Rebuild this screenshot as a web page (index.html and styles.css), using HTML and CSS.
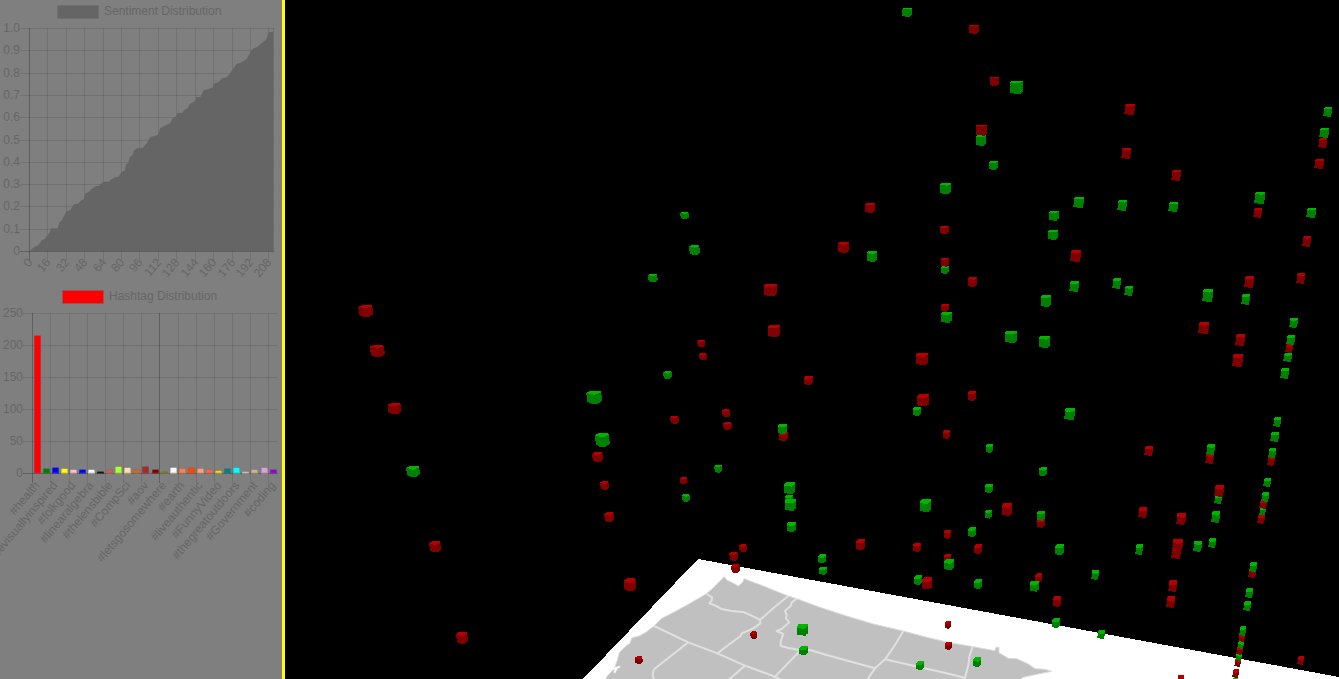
FILE: index.html
```html
<!DOCTYPE html>
<html lang="en">
<head>
<meta charset="utf-8">
<title>Tweet Sentiment Map</title>
<link rel="stylesheet" href="styles.css">
</head>
<body>
<div class="app">
  <aside class="sidebar">
    <svg class="chart" id="sentiment" viewBox="0 0 282 285" role="img" aria-label="Sentiment Distribution"></svg>
    <svg class="chart" id="hashtags" viewBox="0 285 282 290" role="img" aria-label="Hashtag Distribution"></svg>
  </aside>
  <main class="stage">
    <svg class="scene" viewBox="285 0 1054 679" preserveAspectRatio="xMinYMin slice" role="img" aria-label="3D map of tweets">
      <polygon class="plane" points="583,679 698,559 1339,677 1339,679"/>
      <g transform="translate(580 550) scale(0.33333)">
        <path class="land" d="M70,400 L82,378 97,362 105,350 112,330 118,308 135,290 150,280 155,264 180,257 200,245 222,228 245,205 290,182 330,160 378,132 395,118 415,98 433,80 440,90 455,97 475,108 488,97 492,86 545,106 625,138 650,146 720,172 800,198 880,222 970,243 1040,262 1110,278 1180,290 1245,302 1248,292 1257,292 1257,308 1285,325 1310,326 1345,342 1365,356 1395,358 1415,364 1370,373 1330,382 1300,400 Z"/>
        <path class="border" d="M380,132 L396,142 395,152 388,160 405,166 425,177 455,183 490,186 515,197 540,210 M625,138 L585,170 540,210 541,220 520,235 485,250 482,258 445,285 412,310 M222,228 L325,277 412,310 495,347 585,380 605,390 M325,277 L222,358 218,372 222,392 M650,146 L635,157 632,168 615,182 620,195 618,205 628,217 605,237 590,243 610,252 602,275 602,288 625,294 655,299 690,300 740,315 885,355 M658,305 L580,385 M495,347 L445,390 M970,243 L945,285 915,328 885,355 860,392 M915,328 L1020,352 1100,370 1155,384 M1178,290 L1168,320 1165,345 1155,384 1152,392"/>
        <path class="inlet" d="M96,358 L120,350 M112,352 L103,368"/>
      </g>
      <g id="cubes" class="cubes"></g>
    </svg>
  </main>
</div>
<script src="main.js"></script>
</body>
</html>
```

FILE: styles.css
```css
* {
  box-sizing: border-box;
}

body {
  margin: 0;
  background: #000;
  font-family: "Liberation Sans", Arial, Helvetica, sans-serif;
}

.app {
  display: flex;
  height: 100vh;
  overflow: hidden;
}

.sidebar {
  display: flex;
  flex: 0 0 285px;
  flex-direction: column;
  overflow: hidden;
  background: #7f7f7f;
  border-right: 3px solid #ff0;
}

.chart {
  display: block;
  width: 100%;
  flex: none;
}

.chart text {
  fill: #666;
  font-size: 12px;
}

.tick-end {
  text-anchor: end;
}

.grid {
  stroke: rgba(0, 0, 0, 0.1);
  shape-rendering: crispEdges;
}

.axis {
  stroke: rgba(0, 0, 0, 0.25);
  shape-rendering: crispEdges;
}

.area {
  fill: #656565;
}

.swatch {
  stroke: rgba(110, 110, 110, 0.4);
}

.stage {
  flex: 1;
  min-width: 0;
}

.scene {
  display: block;
  width: 100%;
  height: 100%;
}

.plane {
  fill: #fff;
  shape-rendering: crispEdges;
}

.land {
  fill: #c0c0c0;
  stroke: #dcdcdc;
  stroke-width: 3;
}

.border {
  fill: none;
  stroke: #e0e0e0;
  stroke-width: 6;
  stroke-linejoin: round;
}

.inlet {
  fill: none;
  stroke: #fff;
  stroke-width: 6;
}

.cubes {
  shape-rendering: crispEdges;
}

.r-side { fill: #800000; }
.r-top { fill: #b40000; }
.g-side { fill: #008000; }
.g-top { fill: #00b400; }
```

FILE: main.js
```js
const NS = "http://www.w3.org/2000/svg";

function add(parent, tag, attrs, text) {
  const el = document.createElementNS(NS, tag);
  for (const key in attrs) el.setAttribute(key, attrs[key]);
  if (text !== undefined) el.textContent = text;
  parent.appendChild(el);
  return el;
}

function line(parent, cls, x1, y1, x2, y2) {
  add(parent, "line", { class: cls, x1, y1, x2, y2 });
}

function slanted(parent, x, y, text) {
  add(parent, "text", { class: "tick-end", x, y, dy: 4, transform: `rotate(-50 ${x} ${y})` }, text);
}

/* Sentiment chart */
const sentiment = document.getElementById("sentiment");
add(sentiment, "rect", { class: "swatch", x: 57.5, y: 5.5, width: 41, height: 13, fill: "#656565" });
add(sentiment, "text", { x: 104, y: 15 }, "Sentiment Distribution");
for (let i = 0; i <= 10; i++) {
  const y = Math.round(28 + i * 22.3) + 0.5;
  line(sentiment, i === 10 ? "axis" : "grid", 20, y, 274, y);
  add(sentiment, "text", { class: "tick-end", x: 20, y: Math.round(y + 3) }, i === 10 ? "0" : (1 - i / 10).toFixed(1));
}
[29, 47, 66, 84, 103, 121, 139, 158, 176, 195, 213, 232, 250, 268].forEach((x, i) => {
  line(sentiment, i === 0 ? "axis" : "grid", x + 0.5, 28, x + 0.5, 261);
  slanted(sentiment, x + 1, 260, String(i * 16));
});
line(sentiment, "grid", 273.5, 28, 273.5, 251);
add(sentiment, "polygon", {
  class: "area",
  transform: "scale(0.33333)",
  points: "90,753 95,747 103,741 112,738 118,732 126,720 134,717 142,706 150,697 153,685 173,685 178,667 185,662 192,647 200,634 210,631 222,613 234,611 245,600 252,597 256,580 265,577 275,567 286,559 297,557 310,545 327,545 332,539 345,532 355,531 365,517 375,511 378,493 385,490 388,473 397,465 403,451 412,445 428,444 440,430 450,412 475,404 480,385 497,376 510,370 520,352 529,349 532,339 548,338 552,331 562,325 570,311 585,303 588,292 602,290 610,271 625,268 638,262 642,251 655,247 667,235 682,231 697,210 710,191 722,188 740,177 751,157 758,146 770,142 785,130 800,117 805,97 818,95 820,92 820,753"
});

/* Hashtag chart */
const hashtags = document.getElementById("hashtags");
add(hashtags, "rect", { class: "swatch", x: 62.5, y: 290.5, width: 41, height: 13, fill: "#f00" });
add(hashtags, "text", { x: 109, y: 300 }, "Hashtag Distribution");
for (let i = 0; i <= 5; i++) {
  const y = 313.5 + i * 32;
  line(hashtags, i === 5 ? "axis" : "grid", 23, y, 278, y);
  add(hashtags, "text", { class: "tick-end", x: 23, y: y + 3.5 }, 250 - i * 50);
}
const tags = ["#health", "#bevisuallyinspired", "#folkgood", "#linearalgebra", "#thelensbible", "#CompSci", "#aov", "#letsgosomewhere", "#earth", "#liveauthentic", "#FunnyVideo", "#thegreatoutdoors", "#Government", "#coding"];
[32, 50, 69, 87, 105, 123, 141, 159, 178, 196, 214, 232, 250, 268].forEach((x, i) => {
  line(hashtags, i === 0 || i === 7 ? "axis" : "grid", x + 0.5, 313, x + 0.5, 483);
  slanted(hashtags, Math.round(37 + i * 18.16), 483, tags[i]);
});
const bars = [
  ["red", 137], ["green", 4], ["blue", 5], ["yellow", 4], ["pink", 3], ["blue", 3], ["white", 3],
  ["black", 1], ["indianred", 3], ["greenyellow", 6], ["navajowhite", 5], ["chocolate", 3],
  ["brown", 6], ["maroon", 3], ["olive", 1], ["snow", 5], ["coral", 4], ["orangered", 5],
  ["lightsalmon", 4], ["tomato", 3], ["gold", 2], ["teal", 4], ["aqua", 5], ["lightgray", 1],
  ["tan", 3], ["plum", 5], ["darkviolet", 3]
];
bars.forEach(([fill, h], i) => {
  const x = Math.round(33.5 + i * 9.08);
  add(hashtags, "rect", { x, y: 473 - h, width: 7, height: h + 0.5, fill });
  add(hashtags, "rect", { class: "swatch", x: x + 0.5, y: 472.5 - h, width: 6, height: h + 0.5, fill });
});

/* Cubes: centre x, centre y, width, height */
const red = [
  [365.7,311,15,12],[377.3,350.8,15,12],[394.5,408.5,14,11],[597.5,457,11,10],[604.5,485.3,9,9],
  [770.5,290,13,12],[774,331,12,12],[843.5,247.5,11,11],[870,208,10,10],[701.2,343.5,8,7],
  [703,356.5,8,7],[808.3,380.5,9,9],[674.5,419.8,9,8],[726,413.2,8,8],[727.5,426,9,8],[783,436.5,9,9],
  [683.7,480.5,8,7],[609.2,517.2,10,10],[630,584.5,13,13],[743,548,8,8],[733.7,556.2,9,9],
  [735.5,568.7,9,9],[753.7,635.2,7,8],[638.8,660,8,8],[435,546.5,12,11],[462,637.5,12,12],
  [974,29.5,10,9],[994.3,81.5,9,9],[981.5,130,11,11],[944.5,230,9,8],[945,262,8,9],[972.5,282,9,10],
  [945,308,8,8],[922,359,12,12],[923.2,400.3,12,12],[972,396,8,10],[946.5,434.5,7,9],[1075.5,256,11,12],
  [1007,509.3,10,13],[1041,523,8,9],[947.3,534.5,7,9],[860.5,544.5,9,11],[917,547.5,8,9],[978,549,8,10],
  [947.5,558,7,9],[927,583.3,10,12],[1038.5,578,7,10],[1057,601.3,8,11],[948,624.8,6,8],[948.5,645.8,7,8],
  [1129.5,109.5,11,11],[1126,153.5,10,11],[1176,175.5,10,11],[1322.5,143,9,10],[1319,164,10,10],
  [1257.5,213,9,10],[1306.5,241.5,9,11],[1300.5,278.5,9,11],[1249,282,10,12],[1203.5,328,11,12],
  [1240,340,10,12],[1237.5,360.5,11,13],[1289,348.5,8,9],[1271,461,8,9],[1148.5,451,9,10],
  [1209.5,458.5,9,11],[1263.3,504.3,8,9],[1261,519,8,9],[1219,491,10,12],[1142.7,512.7,9,11],
  [1180.7,519.2,10,12],[1177.2,545,11,12],[1176.3,552.5,10,13],[1172.5,586.2,9,12],[1170.7,602,9,12],
  [1252,573.5,8,9],[1241.7,638,7,8],[1239.7,650.5,7,8],[1237.7,663,7,8],[1235.7,673.5,7,9],
  [1180.5,679,7,9],[1300.5,660.5,7,9]
];
const green = [
  [413,471.3,14,11],[594.2,397.2,16,13],[602.3,439.8,15,14],[652.8,278,10,8],[667.5,375,9,8],
  [684.5,215.5,9,7],[694.5,250,11,10],[872,256.5,10,11],[782.5,429,9,10],[718.2,468.5,8,8],
  [686,497.8,8,8],[789.5,488,11,12],[789,499,8,9],[790.5,504.7,11,12],[791.5,527,9,10],[822.2,558.7,8,9],
  [823,570.8,8,8],[802.7,629.5,11,12],[803.5,650.5,9,9],[907.3,12.5,10,9],[1016.8,87.5,13,13],
  [981,140.5,10,11],[993.5,165.5,9,9],[945.5,188.7,11,11],[1078.5,202.5,11,11],[1054,215.7,10,10],
  [1053,235,10,10],[945,270,8,8],[946.5,317.2,11,11],[917,411.5,8,9],[989.5,448.5,7,9],[1074,286.5,10,11],
  [1046,301,10,12],[1011,336.8,12,12],[1044.5,342,11,12],[1069.5,414,11,12],[1043,471.7,8,9],
  [989,488.5,8,9],[925.5,505.5,11,13],[988.5,514,7,9],[1041,515.5,8,10],[972,532,8,10],[949,564.7,10,11],
  [1059.5,549.5,9,11],[918,580,8,10],[978,584,8,10],[1034.5,586,9,11],[1095,574.8,8,10],[1056,623,8,10],
  [920,665.5,8,9],[977,662,8,10],[1122,205.5,10,11],[1173,207,10,10],[1327.5,112,9,10],[1324,133,10,10],
  [1259.5,198,11,12],[1311,213,10,10],[1245.5,299.5,9,11],[1207.5,295.5,11,13],[1116.5,283.5,9,11],
  [1128.5,291,9,10],[1293.3,323,9,10],[1290.5,340,9,10],[1287.5,357.5,9,9],[1284.5,373.5,9,11],
  [1277,422,8,10],[1274.5,437,9,10],[1272,453,8,10],[1210.5,449.5,9,11],[1267,482.5,8,9],[1265,497,8,10],
  [1262.3,511.2,7,10],[1218,499.5,8,9],[1215.5,517,9,12],[1212,543,8,10],[1197.7,546,9,11],
  [1139,549.5,8,11],[1253,567,8,10],[1249,593,8,10],[1247,606,8,10],[1242.5,631,7,10],[1240.7,645,7,8],
  [1238.7,657,7,8],[1235,681,6,8],[1101,634.5,8,9]
];

const layer = document.getElementById("cubes");
const points = list => list.map(p => p.join(",")).join(" ");

function drawCube([cx, cy, w, h, color]) {
  const l = cx - w / 2, r = cx + w / 2, t = cy - h / 2, b = cy + h / 2;
  const depth = h * (0.1 + 0.3 * cy / 679);
  let side, top;
  if (cx < 760) {
    /* seen corner-on */
    side = [[l, t + depth * 0.6], [l + w * 0.3, t], [r - w * 0.12, t], [r - w * 0.06, t + depth * 0.5],
      [r, b - h * 0.25], [r - w * 0.25, b], [l + w * 0.35, b], [l + w * 0.08, b - h * 0.15]];
    top = [[l, t + depth * 0.6], [l + w * 0.3, t], [r - w * 0.12, t], [r - w * 0.06, t + depth * 0.5],
      [l + w * 0.5, t + depth + 0.5]];
  } else if (cx < 1060) {
    side = [[l, t + depth * 0.6], [l + 2, t], [r, t], [r, b - 2], [r - 2, b - 1], [r - 2, b],
      [r - w * 0.5, b], [l, b - 1]];
    top = [[l, t + depth], [l, t + depth * 0.6], [l + 2, t], [r, t], [r, t + depth * 0.5],
      [r - w * 0.3, t + depth * 1.2]];
  } else {
    /* the lower half stands one pixel to the left of the upper half */
    const mid = b - h * 0.3;
    side = [[l + 1, t + 1], [l + 2, t], [r, t], [r, mid - 1], [r - 1, mid], [r - 1, b - 1], [r - 2, b],
      [l + w * 0.4, b], [l + w * 0.4, b - 1], [l, b - 1], [l, mid], [l + 1, mid]];
    top = [[l + 1, t + depth], [l + 1, t + 1], [l + 2, t], [r, t], [r, t + depth * 0.8],
      [r - w * 0.25, t + depth * 1.2]];
  }
  add(layer, "polygon", { class: color + "-side", points: points(side) });
  add(layer, "polygon", { class: color + "-top", points: points(top) });
}

/* Nearer cubes are larger and cover the smaller ones */
[...red.map(c => [...c, "r"]), ...green.map(c => [...c, "g"])]
  .sort((a, b) => a[2] - b[2] || b[1] - a[1])
  .forEach(drawCube);
```
